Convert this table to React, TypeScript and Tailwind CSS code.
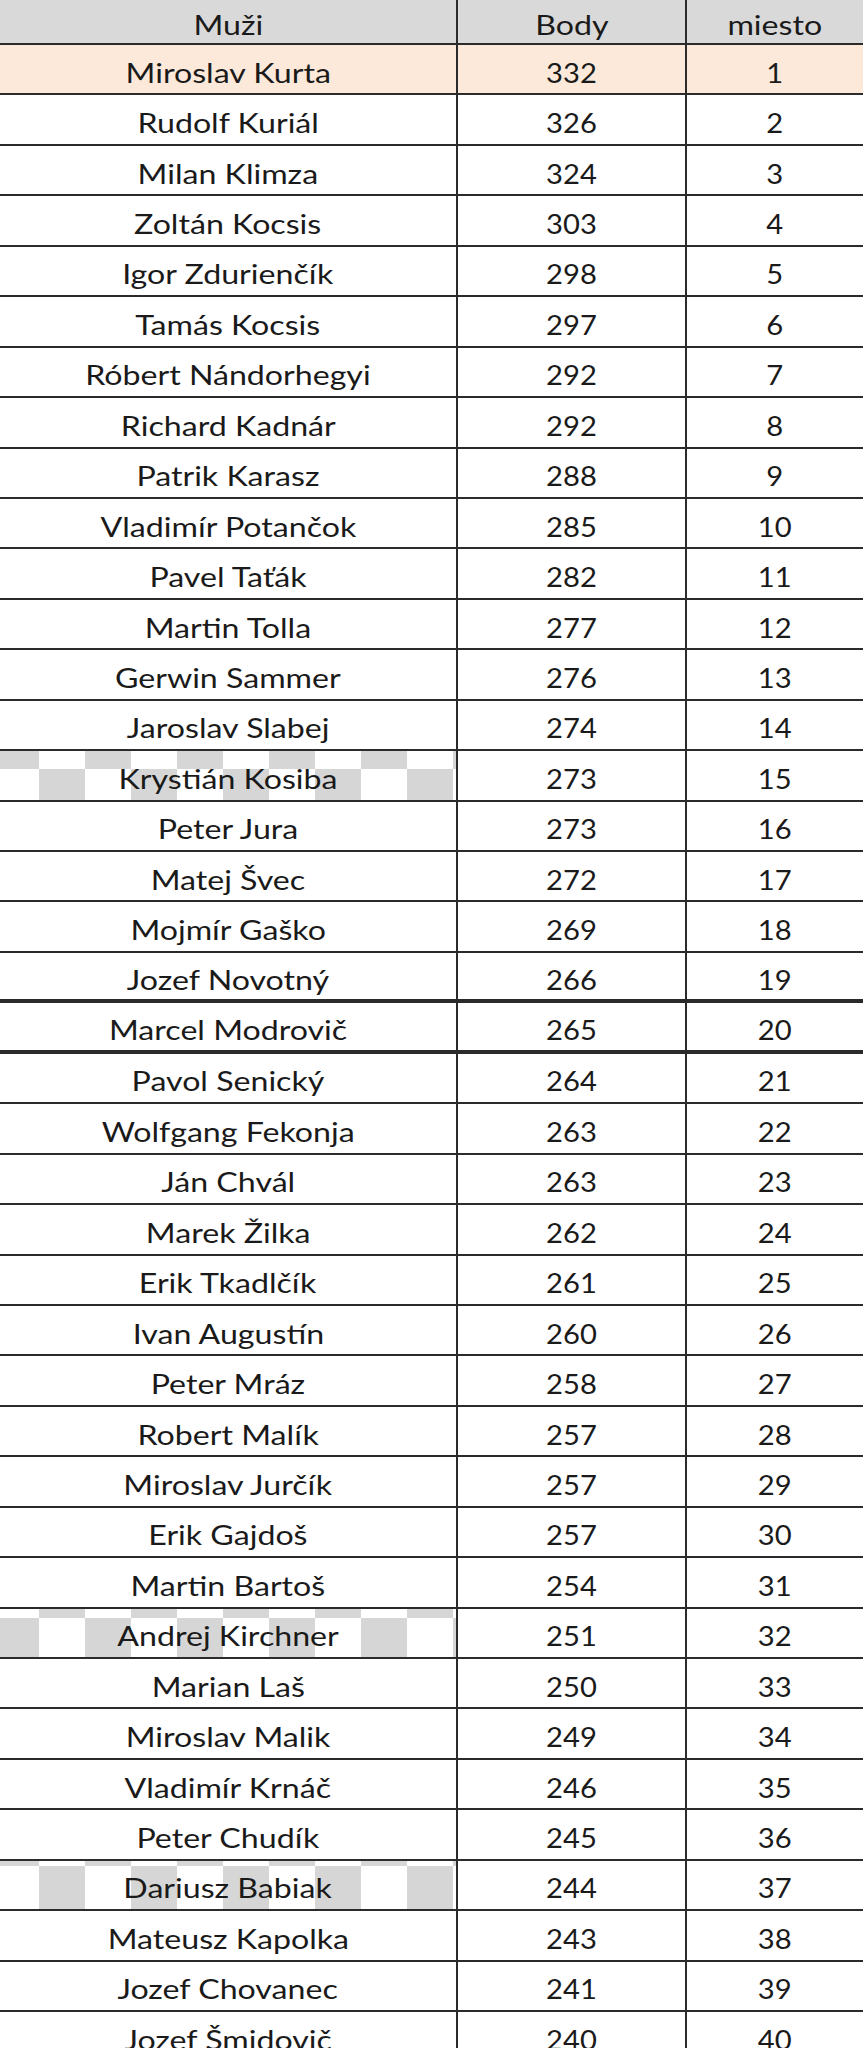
import React from 'react';

type Row = { name: string; body: number; checker?: string };

const ROWS: Row[] = [
  { name: 'Miroslav Kurta', body: 332 },
  { name: 'Rudolf Kuriál', body: 326 },
  { name: 'Milan Klimza', body: 324 },
  { name: 'Zoltán Kocsis', body: 303 },
  { name: 'Igor Zdurienčík', body: 298 },
  { name: 'Tamás Kocsis', body: 297 },
  { name: 'Róbert Nándorhegyi', body: 292 },
  { name: 'Richard Kadnár', body: 292 },
  { name: 'Patrik Karasz', body: 288 },
  { name: 'Vladimír Potančok', body: 285 },
  { name: 'Pavel Taťák', body: 282 },
  { name: 'Martin Tolla', body: 277 },
  { name: 'Gerwin Sammer', body: 276 },
  { name: 'Jaroslav Slabej', body: 274 },
  { name: 'Krystián Kosiba', body: 273, checker: 'bg-[position:-53px_-28px]' },
  { name: 'Peter Jura', body: 273 },
  { name: 'Matej Švec', body: 272 },
  { name: 'Mojmír Gaško', body: 269 },
  { name: 'Jozef Novotný', body: 266 },
  { name: 'Marcel Modrovič', body: 265 },
  { name: 'Pavol Senický', body: 264 },
  { name: 'Wolfgang Fekonja', body: 263 },
  { name: 'Ján Chvál', body: 263 },
  { name: 'Marek Žilka', body: 262 },
  { name: 'Erik Tkadlčík', body: 261 },
  { name: 'Ivan Augustín', body: 260 },
  { name: 'Peter Mráz', body: 258 },
  { name: 'Robert Malík', body: 257 },
  { name: 'Miroslav Jurčík', body: 257 },
  { name: 'Erik Gajdoš', body: 257 },
  { name: 'Martin Bartoš', body: 254 },
  { name: 'Andrej Kirchner', body: 251, checker: 'bg-[position:-7px_-37px]' },
  { name: 'Marian Laš', body: 250 },
  { name: 'Miroslav Malik', body: 249 },
  { name: 'Vladimír Krnáč', body: 246 },
  { name: 'Peter Chudík', body: 245 },
  { name: 'Dariusz Babiak', body: 244, checker: 'bg-[position:-53px_-41px]' },
  { name: 'Mateusz Kapolka', body: 243 },
  { name: 'Jozef Chovanec', body: 241 },
  { name: 'Jozef Šmidovič', body: 240 },
];

const cell = 'flex items-center justify-center pt-[6px] leading-none';

// the sheet was captured stretched sideways, so the glyphs are widened
function T({ children }: { children: React.ReactNode }) {
  return <span className="inline-block scale-x-[1.19] whitespace-nowrap">{children}</span>;
}

function N({ children }: { children: React.ReactNode }) {
  return <span className="inline-block scale-x-[1.08] whitespace-nowrap">{children}</span>;
}

export default function App() {
  return (
    <div className="w-[863px] h-[2048px] overflow-hidden bg-white text-[#1a1a1a] text-[27px] font-['Lato','Open_Sans',sans-serif]">
      {/* header */}
      <div className="grid grid-cols-[458px_229px_1fr] h-[45px] bg-[#d9d9d9] border-b-2 border-[#2b2b2b]">
        <div className={`${cell} border-r-2 border-[#2b2b2b]`}><T>Muži</T></div>
        <div className={`${cell} border-r-2 border-[#2b2b2b]`}><T>Body</T></div>
        <div className={cell}><T>miesto</T></div>
      </div>

      {ROWS.map((r, i) => {
        const thick = i === 18 || i === 19;
        return (
          <div
            key={r.name}
            className={`grid grid-cols-[458px_229px_1fr] h-[50.44px] border-[#2b2b2b] ${thick ? 'border-b-4' : 'border-b-2'} ${i === 0 ? 'bg-[#fde9d9]' : ''}`}
          >
            <div
              className={`${cell} border-r-2 border-[#2b2b2b] ${r.checker ? `bg-[repeating-conic-gradient(#d6d6d6_0%_25%,#ffffff_0%_50%)] bg-[length:92px_92px] ${r.checker}` : ''}`}
            >
              <T>{r.name}</T>
            </div>
            <div className={`${cell} border-r-2 border-[#2b2b2b]`}><N>{r.body}</N></div>
            <div className={cell}><N>{i + 1}</N></div>
          </div>
        );
      })}
    </div>
  );
}
